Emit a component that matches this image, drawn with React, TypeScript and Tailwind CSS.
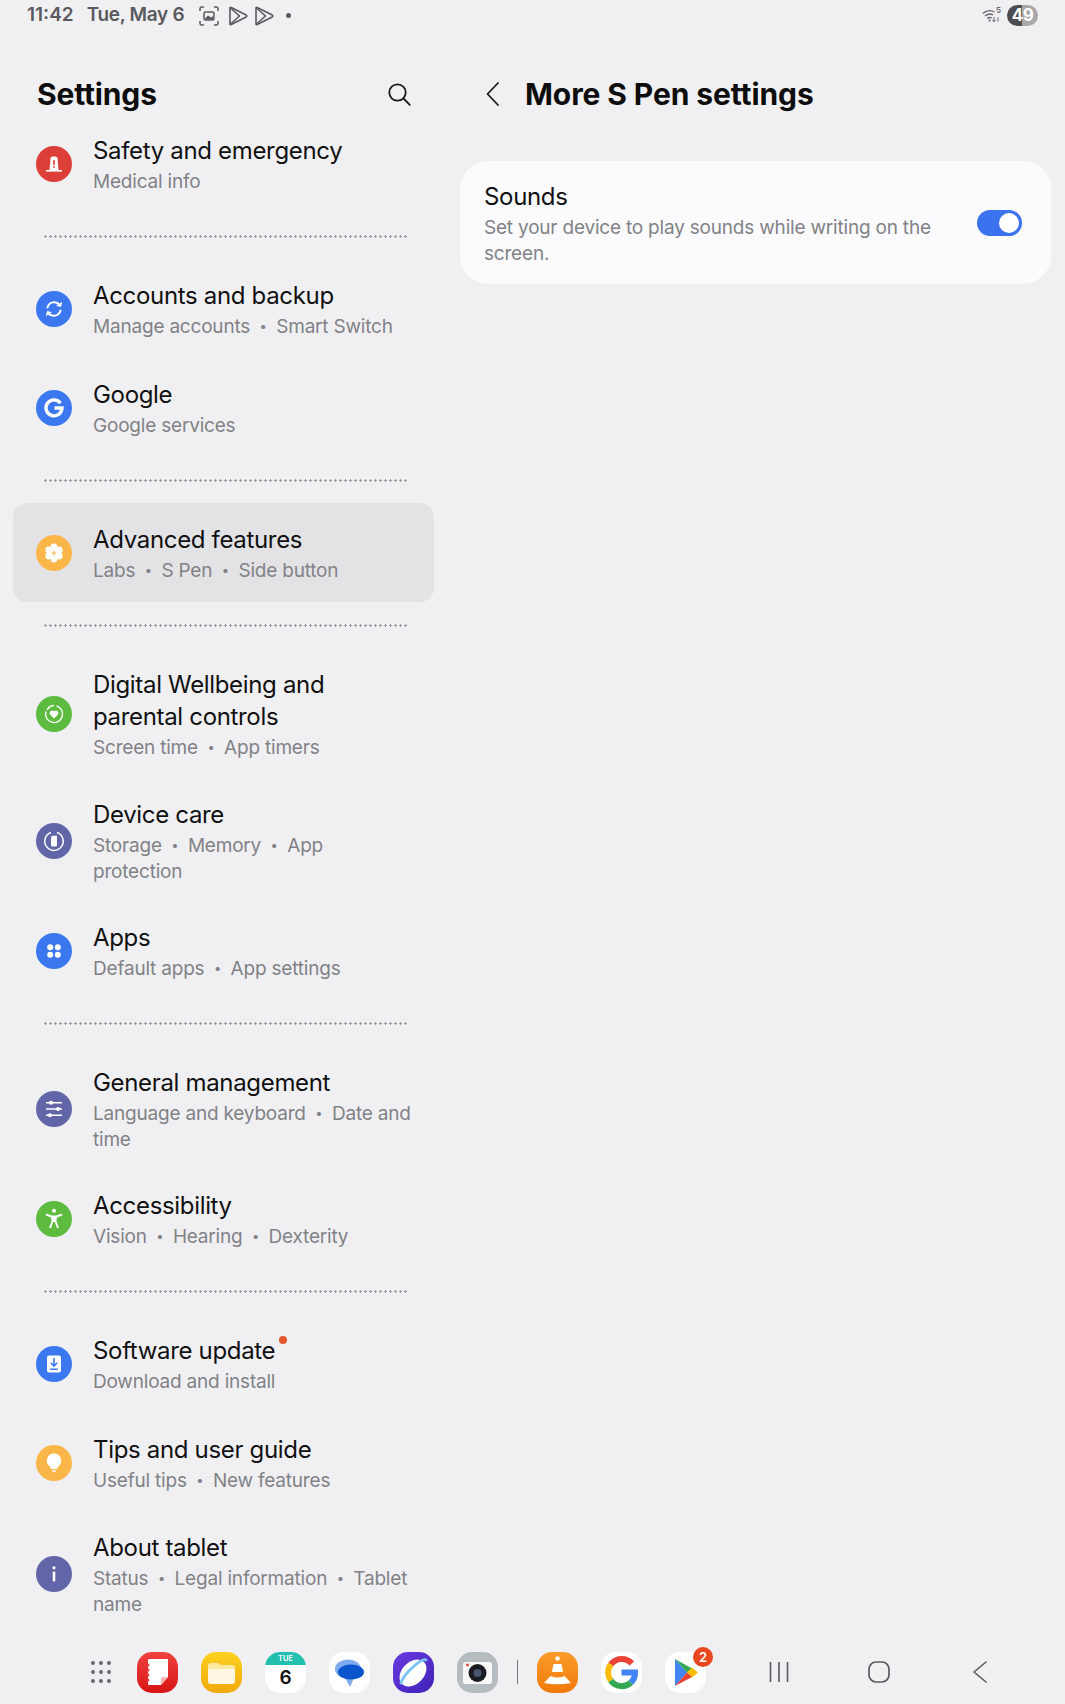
import { Fragment } from "react";
import type { ReactNode } from "react";

interface RowItem {
  title: string;
  sub: string[];
  color: string;
  icon: ReactNode;
  active?: boolean;
  dot?: boolean;
  pb?: string;
}

function Badge({ color, children }: { color: string; children: ReactNode }) {
  return (
    <div className={`w-[36px] h-[36px] mb-[2px] rounded-full flex items-center justify-center flex-shrink-0 ${color}`}>
      <svg viewBox="0 0 36 36" className="w-[36px] h-[36px]">
        {children}
      </svg>
    </div>
  );
}

function Sep() {
  return <span className="mx-[9.5px] text-[13px] leading-none align-[2px]">•</span>;
}

function SettingsRow({ item }: { item: RowItem }) {
  return (
    <div
      className={`flex items-center gap-[21px] pl-[23px] pt-[21px] ${item.pb ?? "pb-[18px]"} ${
        item.active ? "bg-[#e3e3e6] rounded-[14px]" : ""
      }`}
    >
      <Badge color={item.color}>{item.icon}</Badge>
      <div className="w-[319px]">
        <div className="text-[24px] leading-[32px] text-[#111111] tracking-[-0.33px]">
          <span className="relative">
            {item.title}
            {item.dot && (
              <span className="absolute -right-[12px] top-[0px] w-[8px] h-[8px] rounded-full bg-[#e4572e]" />
            )}
          </span>
        </div>
        <div className="mt-[2px] text-[19px] leading-[26px] text-[#828286] tracking-[-0.2px]">
          {item.sub.map((part, i) => (
            <Fragment key={part}>
              {i > 0 && <Sep />}
              {part}
            </Fragment>
          ))}
        </div>
      </div>
    </div>
  );
}

function Divider() {
  return (
    <div className="h-[46px] flex items-center pl-[30px] pr-[26px]">
      <div className="w-full h-[3px] bg-[radial-gradient(circle,#9c9ca0_1px,transparent_1.3px)] bg-[length:5px_3px]" />
    </div>
  );
}

const safety: RowItem = {
  title: "Safety and emergency",
  sub: ["Medical info"],
  color: "bg-[#dc3f38]",
  icon: (
    <>
      <path d="M13.5 24 14.5 12.5Q14.7 10.5 16.5 10.5H19.5Q21.3 10.5 21.5 12.5L22.5 24Z" fill="#fff" />
      <rect x="10" y="24" width="16" height="1.6" fill="#fff" />
      <rect x="17.2" y="14" width="1.6" height="5" fill="#dc3f38" />
      <rect x="17.2" y="20.2" width="1.6" height="1.7" fill="#dc3f38" />
    </>
  ),
};

const groupOne: RowItem[] = [
  {
    title: "Accounts and backup",
    sub: ["Manage accounts", "Smart Switch"],
    color: "bg-[#3b78f0]",
    icon: (
      <g fill="none" stroke="#fff" strokeWidth="2" strokeLinecap="round">
        <path d="M11.5 16.5A7 7 0 0 1 23.5 13.5" />
        <path d="M24.5 19.5A7 7 0 0 1 12.5 22.5" />
        <path d="M25.5 11.5 24.6 15.5 20.8 14.4" fill="#fff" strokeWidth="1" />
        <path d="M10.5 24.5 11.4 20.5 15.2 21.6" fill="#fff" strokeWidth="1" />
      </g>
    ),
  },
  {
    title: "Google",
    sub: ["Google services"],
    color: "bg-[#3b78f0]",
    icon: (
      <path
        d="M24.5 13.2A8 8 0 1 0 26 18H18.5"
        fill="none"
        stroke="#fff"
        strokeWidth="3.4"
      />
    ),
  },
];

const advanced: RowItem = {
  title: "Advanced features",
  sub: ["Labs", "S Pen", "Side button"],
  color: "bg-[#fbb64a]",
  active: true,
  icon: (
    <>
      <g fill="#fff">
        <circle cx="18" cy="12" r="3.4" />
        <circle cx="18" cy="24" r="3.4" />
        <circle cx="12.8" cy="15" r="3.4" />
        <circle cx="23.2" cy="15" r="3.4" />
        <circle cx="12.8" cy="21" r="3.4" />
        <circle cx="23.2" cy="21" r="3.4" />
        <circle cx="18" cy="18" r="4.5" />
      </g>
      <path d="M18 15.6V20.4M15.6 18H20.4" stroke="#fbb64a" strokeWidth="1.2" />
    </>
  ),
};

const groupTwo: RowItem[] = [
  {
    title: "Digital Wellbeing and parental controls",
    sub: ["Screen time", "App timers"],
    color: "bg-[#5dbb3f]",
    pb: "pb-[17px]",
    icon: (
      <>
        <path d="M11 14A8.5 8.5 0 0 1 18 9.5" fill="none" stroke="#fff" strokeWidth="1.4" />
        <path d="M20.5 9.9A8.5 8.5 0 1 1 10 15.5" fill="none" stroke="#fff" strokeWidth="1.4" />
        <path d="M18 22.5 13.8 18.2A2.6 2.6 0 0 1 18 15.3 2.6 2.6 0 0 1 22.2 18.2Z" fill="#fff" />
      </>
    ),
  },
  {
    title: "Device care",
    sub: ["Storage", "Memory", "App protection"],
    color: "bg-[#6266a8]",
    pb: "pb-[16px]",
    icon: (
      <>
        <path d="M15 9.5A9.2 9.2 0 1 0 21 9.5" fill="none" stroke="#fff" strokeWidth="1.5" />
        <path d="M15 14.5Q15 12.8 16.7 12.8H21V22Q21 23.5 19.5 23.5H16.5Q15 23.5 15 22Z" fill="#fff" />
      </>
    ),
  },
  {
    title: "Apps",
    sub: ["Default apps", "App settings"],
    color: "bg-[#3b78f0]",
    icon: (
      <g fill="#fff">
        <circle cx="14.2" cy="14.2" r="3" />
        <circle cx="21.8" cy="14.2" r="3" />
        <circle cx="14.2" cy="21.8" r="3" />
        <circle cx="21.8" cy="21.8" r="3" />
      </g>
    ),
  },
];

const groupThree: RowItem[] = [
  {
    title: "General management",
    sub: ["Language and keyboard", "Date and time"],
    color: "bg-[#6266a8]",
    pb: "pb-[16px]",
    icon: (
      <>
        <path d="M10 11.8H26M10 18H26M10 24.2H26" stroke="#fff" strokeWidth="1.5" />
        <circle cx="15" cy="11.8" r="2" fill="#fff" />
        <circle cx="22" cy="18" r="2" fill="#fff" />
        <circle cx="14" cy="24.2" r="2" fill="#fff" />
      </>
    ),
  },
  {
    title: "Accessibility",
    sub: ["Vision", "Hearing", "Dexterity"],
    color: "bg-[#5dbb3f]",
    icon: (
      <>
        <circle cx="18" cy="9.8" r="2" fill="#fff" />
        <path d="M10 13.5 15.5 15.5H20.5L26 13.5M15.8 15.5 16.6 20 14 27M20.2 15.5 19.4 20 22 27M16.6 20H19.4" fill="none" stroke="#fff" strokeWidth="2" strokeLinejoin="round" />
        <rect x="16" y="15" width="4" height="5.5" fill="#fff" />
      </>
    ),
  },
];

const groupFour: RowItem[] = [
  {
    title: "Software update",
    sub: ["Download and install"],
    color: "bg-[#3b78f0]",
    dot: true,
    icon: (
      <>
        <rect x="11" y="9.5" width="14" height="17" rx="2" fill="#fff" />
        <path d="M18 12V19.5M14.8 16.8 18 20 21.2 16.8M14.2 23.2H21.8" fill="none" stroke="#3b78f0" strokeWidth="1.6" />
      </>
    ),
  },
  {
    title: "Tips and user guide",
    sub: ["Useful tips", "New features"],
    color: "bg-[#fbb64a]",
    pb: "pb-[17px]",
    icon: (
      <>
        <path d="M18 8.5A7.2 7.2 0 0 1 22.2 21.5L21 24H15L13.8 21.5A7.2 7.2 0 0 1 18 8.5Z" fill="#fff" />
        <rect x="15.8" y="25.2" width="4.4" height="1.6" rx="0.8" fill="#fff" />
      </>
    ),
  },
  {
    title: "About tablet",
    sub: ["Status", "Legal information", "Tablet name"],
    color: "bg-[#6266a8]",
    pb: "pb-[16px]",
    icon: (
      <>
        <circle cx="18" cy="11.8" r="1.6" fill="#fff" />
        <rect x="16.7" y="15.5" width="2.6" height="10" rx="0.8" fill="#fff" />
      </>
    ),
  },
];

function PlayOutline() {
  return (
    <svg viewBox="0 0 20 20" className="w-[20px] h-[20px]" fill="none" stroke="#5a5a5e" strokeWidth="1.6" strokeLinejoin="round">
      <path d="M2 2.2Q2 1 3.2 1.5L18.2 9Q19.4 10 18.2 11L3.2 18.5Q2 19 2 17.8Z" />
      <path d="M2.5 2 11.5 10 2.5 18M11.5 10" />
    </svg>
  );
}

function StatusBar() {
  return (
    <div className="h-[30px] pt-[1px] flex items-center pl-[27px] pr-[27px] text-[19px] font-semibold text-[#5a5a5e] flex-shrink-0">
      <span>11:42</span>
      <span className="ml-[13px] tracking-[-0.3px]">Tue, May 6</span>
      <svg viewBox="0 0 20 20" className="w-[20px] h-[20px] ml-[15px]" fill="none" stroke="#5a5a5e" strokeWidth="1.5">
        <path d="M5 1H3Q1 1 1 3V5M15 1H17Q19 1 19 3V5M5 19H3Q1 19 1 17V15M15 19H17Q19 19 19 17V15" />
        <rect x="5" y="6" width="10" height="8" rx="1.5" />
        <path d="M6 12.5 9 9.5 12 11.5 14 10V13.5H6Z" fill="#5a5a5e" stroke="none" />
      </svg>
      <div className="ml-[9px] flex gap-[6px]">
        <PlayOutline />
        <PlayOutline />
      </div>
      <span className="ml-[12px] w-[5px] h-[5px] rounded-full bg-[#5a5a5e]" />
      <div className="ml-auto flex items-center gap-[6px]">
        <div className="relative w-[19px] h-[15px]">
          <svg viewBox="0 0 19 15" className="w-[19px] h-[15px]" fill="none" stroke="#66666a" strokeWidth="1.3">
            <path d="M0.8 5.5Q6.5 0.5 12.5 4M3 8Q7 4.8 11 6.8M5.2 10.5Q7.5 8.8 9.8 10" />
            <circle cx="7.6" cy="12.6" r="1.1" fill="#66666a" stroke="none" />
            <path d="M12 9V13.5M10.5 12 12 13.8 13.5 12M16 13.5V9.5" strokeWidth="1" />
          </svg>
          <span className="absolute right-0 -top-[2px] text-[8px] leading-[9px] font-semibold text-[#66666a]">5</span>
        </div>
        <div className="w-[31px] h-[21px] rounded-full bg-[linear-gradient(90deg,#4d4d50_50%,#a8a8ab_50%)] flex items-center justify-center text-[17px] leading-none font-bold text-white tracking-[-0.5px]">
          49
        </div>
      </div>
    </div>
  );
}

function Sidebar() {
  return (
    <aside className="w-[447px] pl-[13px] flex-shrink-0 overflow-hidden">
      <div className="w-[421px]">
        <div className="h-[84px] pt-[44px] pl-[24px] pr-[23px] flex items-center justify-between">
          <h1 className="text-[30px] font-bold tracking-[-0.15px] text-[#0d0d0d]">Settings</h1>
          <svg viewBox="0 0 24 24" className="w-[24px] h-[24px]" fill="none" stroke="#1a1a1a" strokeWidth="1.8" strokeLinecap="round">
            <circle cx="10.5" cy="10.5" r="8.2" />
            <path d="M16.5 16.5 22.8 22.8" />
          </svg>
        </div>
        <SettingsRow item={safety} />
        <Divider />
        {groupOne.map((item) => (
          <SettingsRow key={item.title} item={item} />
        ))}
        <Divider />
        <SettingsRow item={advanced} />
        <Divider />
        {groupTwo.map((item) => (
          <SettingsRow key={item.title} item={item} />
        ))}
        <Divider />
        {groupThree.map((item) => (
          <SettingsRow key={item.title} item={item} />
        ))}
        <Divider />
        {groupFour.map((item) => (
          <SettingsRow key={item.title} item={item} />
        ))}
      </div>
    </aside>
  );
}

function DetailPane() {
  return (
    <main className="flex-1 pl-[13px] pr-[14px]">
      <div className="h-[84px] pt-[44px] pl-[26px] flex items-center gap-[26px]">
        <svg viewBox="0 0 13 24" className="w-[13px] h-[24px]" fill="none" stroke="#1a1a1a" strokeWidth="1.8" strokeLinecap="round" strokeLinejoin="round">
          <path d="M12 1 1.5 12 12 23" />
        </svg>
        <h2 className="text-[30px] font-bold tracking-[-0.1px] text-[#0d0d0d]">More S Pen settings</h2>
      </div>
      <div className="mt-[47px] bg-[#fbfbfe] rounded-[28px] pl-[24px] pr-[29px] pt-[20px] pb-[17px] flex items-center justify-between">
        <div className="w-[460px]">
          <div className="text-[24px] leading-[32px] text-[#111111] tracking-[-0.33px]">Sounds</div>
          <div className="mt-[2px] text-[19px] leading-[26px] text-[#828286] tracking-[-0.2px]">
            Set your device to play sounds while writing on the screen.
          </div>
        </div>
        <div className="w-[45px] h-[26px] mb-[2px] rounded-full bg-[#3b72ee] flex items-center justify-end pr-[3px]">
          <div className="w-[20px] h-[20px] rounded-full bg-white" />
        </div>
      </div>
    </main>
  );
}

function AppIcon({ className, children }: { className: string; children: ReactNode }) {
  return (
    <div className={`w-[41px] h-[41px] rounded-[15px] flex-shrink-0 ${className}`}>
      <svg viewBox="0 0 41 41" className="w-[41px] h-[41px]">
        {children}
      </svg>
    </div>
  );
}

function Dock() {
  return (
    <div className="h-[80px] flex items-center flex-shrink-0 pt-[16px] pl-[91px]">
      <div className="grid grid-cols-3 gap-x-[4px] gap-y-[5px] mr-[26px]">
        {Array.from({ length: 9 }).map((_, i) => (
          <span key={i} className="w-[4px] h-[4px] rounded-full bg-[#6a6a6e]" />
        ))}
      </div>
      <div className="flex items-center gap-[23px]">
        <AppIcon className="bg-[linear-gradient(180deg,#ef4340,#d81414)]">
          <path d="M11 8Q11 7 12 7H31V25L24 33H12Q11 33 11 32Z" fill="#fff" />
          <path d="M31 25H26Q24 25 24 27V33Z" fill="#f7b3ac" />
          <g fill="#ea3d3a">
            <circle cx="11" cy="13" r="1.5" />
            <circle cx="11" cy="18" r="1.5" />
            <circle cx="11" cy="23" r="1.5" />
            <circle cx="11" cy="28" r="1.5" />
          </g>
        </AppIcon>
        <AppIcon className="bg-[linear-gradient(180deg,#fdd21f,#efa90c)]">
          <path d="M7 14Q7 11 10 11H17L20 13H31Q34 13 34 16V18H7Z" fill="#fde9a0" />
          <path d="M7 17H34V29Q34 32 31 32H10Q7 32 7 29Z" fill="#fff7e2" />
        </AppIcon>
        <div className="relative w-[41px] h-[41px] rounded-[15px] bg-white overflow-hidden flex-shrink-0">
          <div className="h-[13px] bg-[#23c0b0] text-[7.5px] leading-[13px] font-semibold text-white text-center">TUE</div>
          <div className="text-[19px] leading-[25px] font-semibold text-[#111] text-center">6</div>
        </div>
        <AppIcon className="bg-white">
          <ellipse cx="19" cy="17" rx="13" ry="9.5" fill="#7fabef" />
          <path d="M15 24 21 35 25 26Z" fill="#7fabef" />
          <ellipse cx="22" cy="20" rx="13" ry="7.5" fill="#0b55cc" />
        </AppIcon>
        <AppIcon className="bg-[linear-gradient(135deg,#6a3be0,#3f22b8)]">
          <ellipse cx="20" cy="21" rx="15.5" ry="11" fill="#fff" transform="rotate(-45 20 21)" />
          <path d="M8 31Q10 24 20 15T33 8" fill="none" stroke="#7cc4f5" strokeWidth="3" strokeLinecap="round" />
        </AppIcon>
        <AppIcon className="bg-[#b6bbc0]">
          <rect x="6" y="10" width="29" height="22" rx="2.5" fill="#f7f7f8" />
          <circle cx="20.5" cy="21" r="9" fill="#1b1b22" />
          <circle cx="20.5" cy="21" r="4" fill="#46566c" />
          <circle cx="10.5" cy="13" r="1.4" fill="#dc3f38" />
        </AppIcon>
        <div className="w-[1px] h-[24px] bg-[#77777b] mx-[-4px]" />
        <AppIcon className="bg-[linear-gradient(180deg,#fb9c2c,#f07a0a)]">
          <circle cx="20.5" cy="6.5" r="2.2" fill="#fff" />
          <path d="M16.5 12H24.5L26 20H15Z" fill="#fff" />
          <path d="M13.5 24Q20.5 27 27.5 24L34 31Q20.5 33.5 7 31Z" fill="#fff" />
        </AppIcon>
        <AppIcon className="bg-white">
          <g fill="none" strokeWidth="6">
            <path d="M30.8 11.5A13.5 13.5 0 0 0 9.8 12.5" stroke="#ea4335" />
            <path d="M9.8 12.5A13.5 13.5 0 0 0 9.8 28.5" stroke="#fbbc05" />
            <path d="M9.8 28.5A13.5 13.5 0 0 0 30 30.5" stroke="#34a853" />
            <path d="M30 30.5A13.5 13.5 0 0 0 34 20.5H20.5" stroke="#4285f4" />
          </g>
        </AppIcon>
        <div className="relative flex-shrink-0">
          <AppIcon className="bg-white">
            <path d="M10 7 22 20.5 10 34Z" fill="#4285f4" />
            <path d="M10 7 27 16.5 22 20.5Z" fill="#34a853" />
            <path d="M27 15.5 33 20.5 27 25.5 22 20.5Z" fill="#fbbc05" />
            <path d="M10 34 27 25 22 20.5Z" fill="#ea4335" />
          </AppIcon>
          <span className="absolute -right-[7px] -top-[5px] w-[20px] h-[20px] rounded-full bg-[#e8471f] text-[13px] leading-[20px] font-semibold text-white text-center">2</span>
        </div>
      </div>
      <div className="flex items-center ml-[63px] gap-[79px]">
        <svg viewBox="0 0 20 20" className="w-[20px] h-[20px]" fill="none" stroke="#5a5a5e" strokeWidth="1.6" strokeLinecap="round">
          <path d="M1.5 0.5V19.5M10 0.5V19.5M18.5 0.5V19.5" />
        </svg>
        <svg viewBox="0 0 22 22" className="w-[22px] h-[22px]" fill="none" stroke="#5a5a5e" strokeWidth="1.7">
          <rect x="1" y="1" width="20" height="20" rx="7" />
        </svg>
        <svg viewBox="0 0 14 22" className="w-[14px] h-[22px] ml-[4px]" fill="none" stroke="#5a5a5e" strokeWidth="1.6" strokeLinecap="round" strokeLinejoin="round">
          <path d="M13 1 1 11 13 21" />
        </svg>
      </div>
    </div>
  );
}

export default function App() {
  return (
    <div className="w-[1065px] h-[1704px] bg-[#f0f0f3] flex flex-col overflow-hidden font-['Inter',sans-serif]">
      <StatusBar />
      <div className="flex-1 flex min-h-0">
        <Sidebar />
        <DetailPane />
      </div>
      <Dock />
    </div>
  );
}
